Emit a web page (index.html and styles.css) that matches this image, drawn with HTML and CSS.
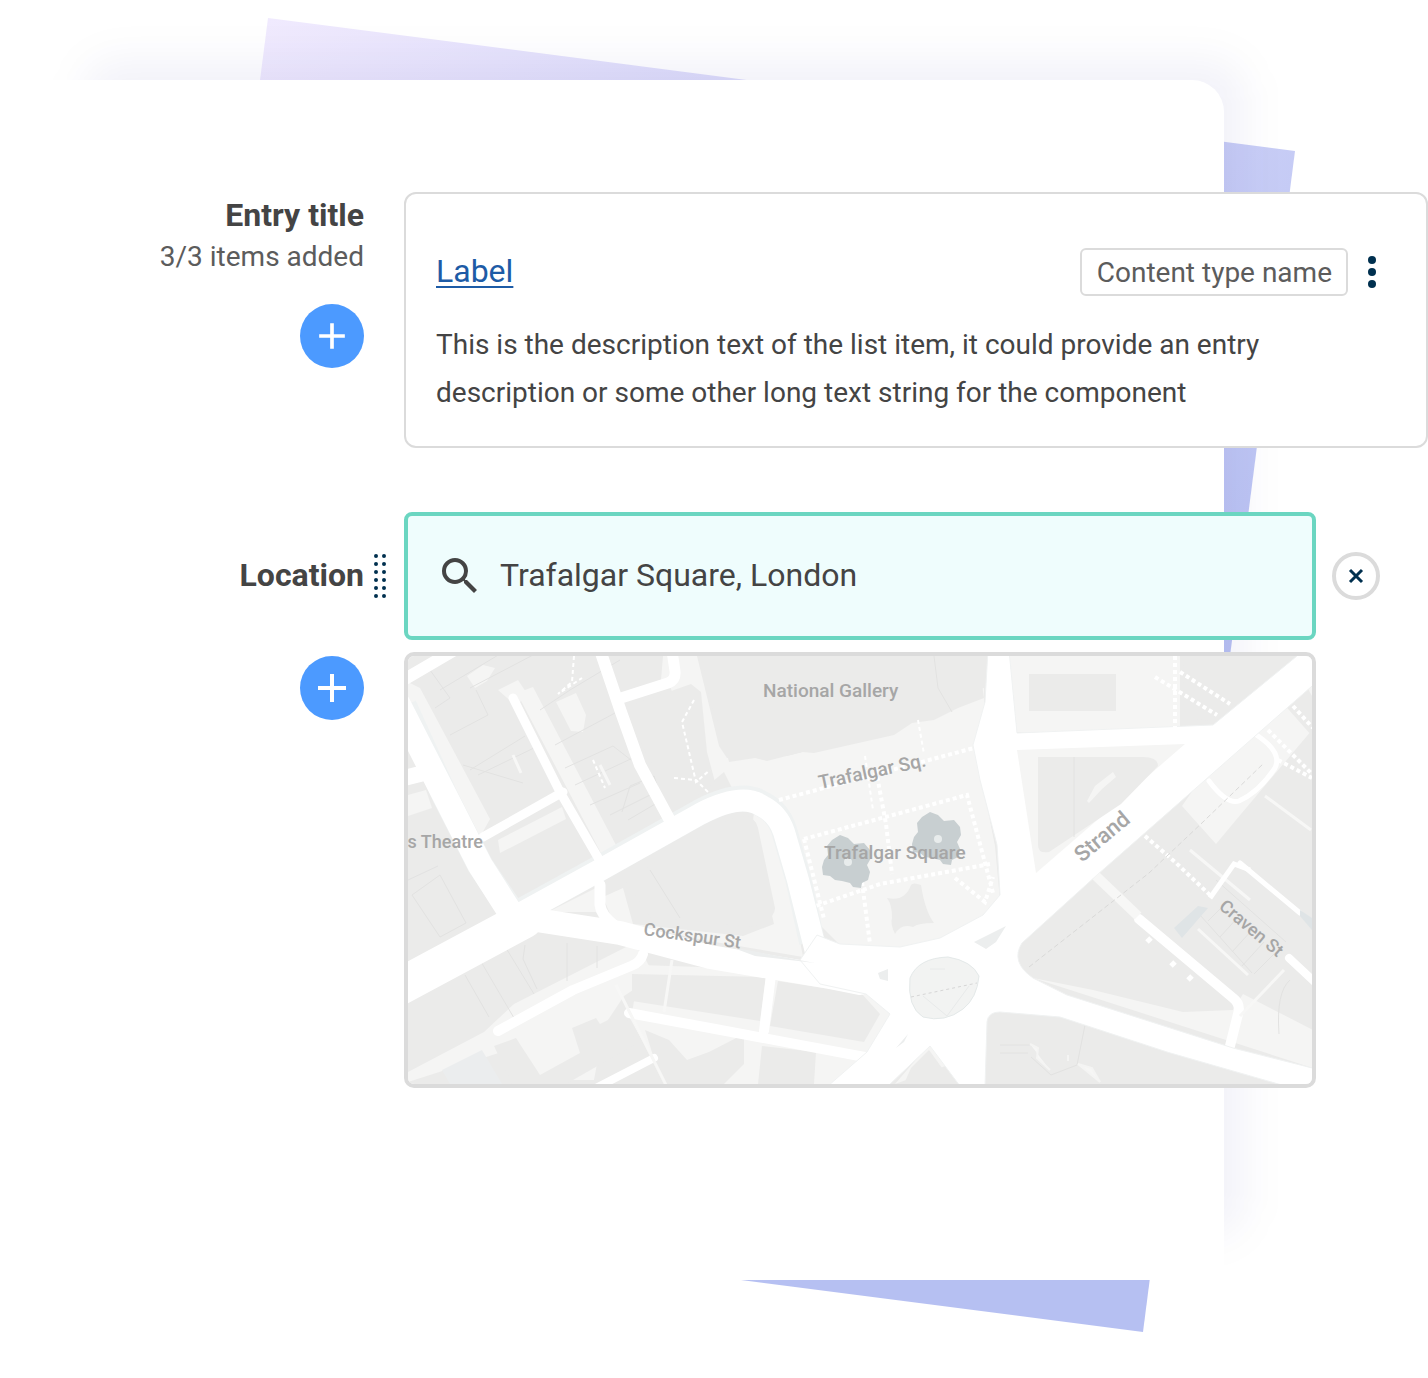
FILE: index.html
```html
<!doctype html>
<html lang="en">
<head>
    <meta charset="UTF-8">
    <meta name="viewport" content="width=device-width, initial-scale=1">
    <title>Entry editor</title>
    <link rel="stylesheet" href="styles.css">
</head>
<body>
<main class="stage">
    <svg class="backdrop" viewBox="0 0 1428 1378" aria-hidden="true">
        <defs>
            <linearGradient id="tint" gradientUnits="userSpaceOnUse" x1="268" y1="18" x2="1180" y2="800">
                <stop offset="0" stop-color="#f0eafe"/>
                <stop offset="1" stop-color="#b6c0f2"/>
            </linearGradient>
            <filter id="soft" x="-20%" y="-20%" width="140%" height="140%">
                <feGaussianBlur stdDeviation="20"/>
            </filter>
        </defs>
        <polygon points="268,18 1295,151 1143,1332 116,1199" fill="url(#tint)"/>
        <rect x="84" y="60" width="1160" height="1176" rx="32" fill="#28148c" fill-opacity=".05" filter="url(#soft)"/>
    </svg>
    <div class="panel"></div>
    <form class="form">
        <section class="row">
            <div class="head">
                <h2 class="title">Entry title</h2>
                <p class="count">3/3 items added</p>
                <button class="add" type="button" aria-label="Add item">
                    <svg class="add-icon add-icon-small" viewBox="0 0 24 24"><path d="M19 13h-6v6h-2v-6H5v-2h6V5h2v6h6z"/></svg>
                </button>
            </div>
            <article class="card">
                <div class="card-top">
                    <a class="card-link" href="#">Label</a>
                    <span class="type">Content type name</span>
                    <button class="more" type="button" aria-label="More options">
                        <svg width="16" height="48" viewBox="0 0 16 48"><circle cx="8" cy="12" r="4"/><circle cx="8" cy="24" r="4"/><circle cx="8" cy="36" r="4"/></svg>
                    </button>
                </div>
                <p class="card-text">This is the description text of the list item, it could provide an entry description or some other long text string for the component</p>
            </article>
        </section>

        <section class="row row-location">
            <label class="title title-side" for="location">Location</label>
            <button class="drag" type="button" aria-label="Reorder">
                <svg width="12" height="44" viewBox="0 0 12 44">
                    <path d="M2 2v41M10 2v41" stroke="#00304f" stroke-width="4" stroke-linecap="round" stroke-dasharray="0 8"/>
                </svg>
            </button>
            <div class="search">
                <svg class="search-icon" viewBox="0 0 24 24"><path d="M15.5 14h-.79l-.28-.27A6.47 6.47 0 0 0 16 9.500 6.500 6.500 0 1 0 9.500 16c1.610 0 3.090-.59 4.230-1.570l.27.28v.79l5 4.990L20.490 19l-4.990-5zm-6 0C7.010 14 5 11.990 5 9.500S7.010 5 9.500 5 14 7.010 14 9.500 11.990 14 9.500 14z"/></svg>
                <input class="search-input" id="location" type="text" value="Trafalgar Square, London">
            </div>
            <button class="remove" type="button" aria-label="Remove location">
                <svg width="16" height="16" viewBox="0 0 16 16"><path d="M2 2l12 12M14 2L2 14" stroke="#00304f" stroke-width="3"/></svg>
            </button>
            <button class="add add-map" type="button" aria-label="Add location">
                <svg class="add-icon" viewBox="0 0 24 24"><path d="M19 13h-6v6h-2v-6H5v-2h6V5h2v6h6z"/></svg>
            </button>
            <div class="map">
                <svg class="map-svg" viewBox="408 656 904 428" role="img" aria-label="Map of Trafalgar Square">
                    <rect x="408" y="656" width="904" height="428" fill="#ebebea"/>

                    <!-- open ground -->
                    <g fill="#f5f5f4">
                        <path d="M408 682l12 6 70 131-10 18-72-125zM467 676l16-11 12 3 -8 13 -12 7zM498 690l20-10 12 18 -16 6zM556 702l20-9 10 22-3 17-12-1zM408 795l18-5 6 18-24 8z"/>
                        <path d="M517 693l16-6 84 160-14 10zM498 840l64-33 4 12-66 34zM653 656h44l22 90 8 12 55-6 5 4 40-10 20-8 26-12 26-14 25-8 10-4 50-12v80l-10 20-70 4-90 30-80-30-10-20-24 20-14-20-2-46-14-40-44 10z"/>
                        <path d="M780 798l195-52 20 100 5 55-30 30-60 18-70-4-20-20z"/>
                        <path d="M1009 656h171v76h-163zM755 805l22 12 26 140-100-17-90-19-10-24 20-9 10 36 110 12 31-12-22-96zM548 912l48-24v24zM408 1082v-10l76-40 30-28 118-60 12 12 10 20-30 20 -20 30-10 54h-76l-10-30z"/>
                        <path d="M640 965l60 2 200 30-2 40-26 20-160-30-80-14zM627 1013l40 72h170l40-30zM895 1084l36-42 20 22zM1033 978l60 12 90 22 50-2 10-16 70 36v38z"/>
                        <path d="M1200 780l112-104v54l-76 90-20 24-34-38z"/>
                    </g>

                    <!-- buildings -->
                    <g fill="#ebebea">
                        <path d="M702 656h276l6 42-26 10-24 12-22 3-18 12-80 18-12-1-35 9-12-3-26 4-9-36-10-24z"/>
                        <path d="M623 708l68-24 10 8 6 60 8 30-42 32-16-40zM607 656h56l-2 24-40 14z"/>
                        <path d="M1029 674h87v37h-87z"/>
                        <path d="M1183 656h113l-78 65q-34 0-34-14z"/>
                        <path d="M625 880l100-58q28-14 33 6l17 80q0 12-22 19l-103-10zM632 974l134 3-6 44-128-20zM778 981l84 13 18 20-16 28-94-16zM494 1046l22-8 24 37 40-22-8-25 24-10 4 6 24-12 12 32-70 40h-54zM645 1030l24 10 18 20 22-8 35-18v30l-20 20h-62zM762 1046l54 6-2 32h-56z"/>
                        <path d="M887 898q18 4 24-13 2-3 10 0 4 26 13 38-16 0-21 4-12-4-18 7-5-10-3-16 0-14-5-20z"/>
                        <path d="M1281 701l31 35v-40l-10-18z"/>
                    </g>

                    <!-- plot outlines -->
                    <g fill="none" stroke="#e2e2e1" stroke-width="1">
                        <path d="M430 670l20 28-15 10M440 690l60-36M450 735l38-20-12-25M470 770l55-34M463 765l60 18M478 775l58-28M470 688l84-44M540 710l30-20 50-30M555 745l60-32M565 768l48-22 18 14M575 785l60-28M590 805l50-22M610 815l40-20M622 812l8-26 24-10 8 24-34 20"/>
                        <path d="M412 895l28-20 26 48-26 14zM408 880l30-14M465 975l24 42M480 960l34 58M506 948l28 46M525 945l-2 14 14 30M567 943v38M597 946v22M650 870l30 48M934 656l4 32 14 24"/>
                        <path d="M1200 915l52 58M1216 880l70 62M1226 903l-18 18M1240 915l-20 22M1252 930l-20 22M1264 942l-22 24M1276 952l-22 22M1290 980q-14 12-11 54M1000 1045h30M1000 1053h28M1085 1025l-8 40-26 10-20-18"/>
                    </g>
                    <path d="M450 1084l-8-14 40-20 20 34z" fill="#ebedee"/>

                    <!-- road edges -->
                    <g fill="none" stroke="#eff2f2" stroke-width="26" stroke-linejoin="round">
                        <path d="M404 706l41 90 35 69 30 44M520 912l80-44 100-56q42-22 62-8 16 8 22 26l14 48 14 64"/>
                    </g>

                    <!-- roads -->
                    <g fill="none" stroke="#fff" stroke-linecap="round" stroke-linejoin="round">
                        <path stroke-width="25" d="M398 704l47 92 35 69 30 47"/>
                        <path stroke-width="16" d="M400 779l36-9"/>
                        <path stroke-width="12" d="M400 682l58-34M600 650l21 62 19 53 34 63"/>
                        <path stroke-width="9" d="M513 698l47 94 44 76M483 837l80-45"/>
                        <path stroke-width="11" d="M621 698l47-15q8-3 7-12l-3-20M600 885v20q1 10 14 20"/>
                        <path stroke-width="37" d="M390 992l134-72"/>
                        <path stroke-width="22" d="M520 914l80-44 100-56q42-22 62-8 16 8 22 26l14 48 20 80"/>
                        <path stroke-width="24" d="M530 919l90 14 90 24 120 20 30 6"/>
                        <path stroke-width="10" d="M498 1031l75-41 58-24q10-4 12-12M629 1013l81 15 160 30M771 975l-7 56M1139 919l94 79q8 6 5 16l-8 32"/>
                        <path stroke-width="8" d="M594 1089l60-31M1289 958l30 28"/>
                        <path stroke-width="5" d="M1240 863l60 50M1255 734q28 18 20 34-16 24-36 33-12 4-30-20"/>
                    </g>
                    <path d="M988 650L985 702 973 745 980 780 997 845 1000 895 983 915 940 938 900 947 840 944 817 935 800 960 820 984 866 994 890 1014 867 1052 828 1086H888L930 1046 960 1086H985L987 1022Q988 1012 1000 1012L1060 1017 1167 1052 1320 1096V1070L1233 1048 1067 995 1033 978Q1010 962 1022 943L1097 875 1320 679V636L1297 656 1213 725 1017 733 1009 650z" fill="#fff" stroke="#f0f2f2" stroke-width="1"/>

                    <!-- strand corner block -->
                    <path d="M1017 750l168-6-149 129z" fill="#f5f5f4"/>
                    <path d="M1038 757h105q15 0 15 9l-37 38-72 48q-11 2-11-7z" fill="#ebebea"/>
                    <path d="M1087 801l8-15 18-14 3 5-14 12-13 14z" fill="#f5f5f4"/>
                    <path d="M1074 757v80" stroke="#e2e2e1"/>
                    <path d="M903 1086l8-18 18-18 26 36z" fill="#ebebea"/>

                    <!-- square and islands -->
                    <path d="M910 978q8-20 38-21 24 4 31 19-2 22-16 33-18 14-40 8-16-10-13-39z" fill="#f2f3f2" stroke="#e4e9e9"/>
                    <path d="M911 997l66-14" stroke="#d6d6d6" stroke-width="1" stroke-dasharray="3 3"/>
                    <path d="M923 996l24 20 22-30M930 969h15" stroke="#e8eaea" fill="none"/>
                    <path d="M974 942l32-16-10 16-10 7zM731 947l84 16-60-7zM878 973l10-4v12l-8-2zM896 1048l12-14-4 8z" fill="#eceeee"/>

                    <!-- footpaths -->
                    <g fill="none" stroke="#fff" stroke-width="4" stroke-dasharray="4 3">
                        <path d="M779 800l195-52M804 839l163-44 26 98M804 839l20 80M810 908l70-24 110-20M862 882l8 62M876 770l10 54 6 50M955 878l30 24 8-25"/>
                        <path d="M1175 656v74M1155 677l62 38M1180 672l50 32M1293 706l20 22M1268 730l44 44M1278 760l34 18M1145 836l30 26 36 34"/>
                        <path stroke-width="2" d="M694 700l-12 22 14 60 14-12M674 778l22 2 12 12M593 760l12 28M574 656l-2 26-14 12 24-16M865 756l8 54M918 720l6 34"/>
                    </g>
                    <g fill="none" stroke="#f7f7f6" stroke-width="3">
                        <path d="M600 765l10 20M513 755l8 18M672 960l-8 52M616 985l50 100M1198 929l50 46M1284 970l-44 46M1190 850l60 50M1265 796l46 34"/>
                        <path stroke-width="10" d="M1096 876l42 40"/>
                    </g>
                    <path d="M1210 898l24-34 16 6M1151 938l-4 4M1175 962l-4 4M1192 976l-4 4" fill="none" stroke="#fff" stroke-width="5"/>
                    <path d="M1029 967l120-94 55-52 60-58" fill="none" stroke="#d9d9d8" stroke-width="1" stroke-dasharray="5 3"/>
                    <path d="M1174 928l24-22 10 2-26 30zM1300 910l12 8v12l-12-14z" fill="#dfe4e6"/>
                    <path d="M1030 1044l8 4-1 10 13 12M1078 1064l14 4 8 14zM1068 1055v6" fill="#f6f6f5" stroke="#f4f4f3" stroke-width="2"/>

                    <!-- fountains -->
                    <g id="fountain">
                        <path d="M832 840l8-5 8 3 6 6 10-1 6 7 1 8-4 7 3 7-2 8-6 3-1 5-8-1-3-4-8-2-7-1-5-4-7-1-1-8 2-7 4-5-1-9z" fill="#c8cfd1"/>
                        <circle cx="848" cy="862" r="4" fill="#e8ecec"/>
                    </g>
                    <use href="#fountain" x="90" y="-23"/>

                    <!-- place names -->
                    <g class="map-label">
                        <text class="map-label-place" x="763" y="697">National Gallery</text>
                        <text class="map-label-place" x="824" y="859">Trafalgar Square</text>
                        <text x="483" y="848" text-anchor="end">s Theatre</text>
                        <text class="map-label-place" transform="translate(820 789) rotate(-12)">Trafalgar Sq.</text>
                        <text transform="translate(643 935) rotate(8)">Cockspur St</text>
                        <text class="map-label-large" transform="translate(1082 863) rotate(-40)">Strand</text>
                        <text transform="translate(1218 908) rotate(40)">Craven St</text>
                    </g>
                </svg>
            </div>
        </section>
    </form>
</main>
</body>
</html>
```

FILE: styles.css
```css
* {
    margin: 0;
    padding: 0;
    box-sizing: border-box;
}

body {
    background: #fff;
    color: #444;
    font-family: Roboto, sans-serif;
}

button {
    border: 0;
    background: none;
    cursor: pointer;
}

svg {
    display: block;
}

/* panel and form share one grid cell, the form runs past the panel edge */
.stage {
    position: relative;
    display: grid;
    padding: 80px 0 98px;
    overflow: hidden;
}

.backdrop {
    position: absolute;
    top: 0;
    left: 0;
    width: 100%;
    z-index: -1;
}

.panel, .form {
    grid-area: 1 / 1;
}

.panel {
    min-height: 1200px;
    margin-right: 204px;
    border-radius: 0 32px 0 0;
    background: #fff;
}

.form {
    display: flex;
    flex-direction: column;
    gap: 64px;
    padding-top: 112px;
}

.row {
    display: grid;
    grid-template-columns: 364px minmax(0, 1fr);
    column-gap: 40px;
}

.head {
    display: flex;
    flex-direction: column;
    align-items: flex-end;
}

.title {
    font-size: 32px;
    line-height: 46px;
    font-weight: 700;
}

.title-side {
    padding-bottom: 2px;
    text-align: right;
}

.count {
    color: #5c5c5c;
    font-size: 28px;
    line-height: 38px;
}

.add {
    display: flex;
    align-items: center;
    justify-content: center;
    width: 64px;
    height: 64px;
    border-radius: 50%;
    background: #4c9aff;
}

.head .add {
    margin-top: 28px;
}

.add-icon {
    width: 48px;
    height: 48px;
    fill: #fff;
}

.add-icon-small {
    width: 44px;
    height: 44px;
}

.card {
    padding: 54px 30px 29px;
    border: 2px solid #dbdbdb;
    border-radius: 12px;
    background: #fff;
}

.card-top {
    display: flex;
    align-items: center;
    gap: 16px;
    padding-right: 16px;
    margin-bottom: 25px;
}

.card-link {
    margin-right: auto;
    padding-bottom: 2px;
    color: #1d5ba6;
    font-size: 32px;
    line-height: 46px;
    text-decoration-thickness: 2px;
    text-underline-offset: 4px;
}

.type {
    padding: 2px 14px 0 15px;
    border: 2px solid #dbdbdb;
    border-radius: 6px;
    color: #5c5c5c;
    font-size: 28px;
    line-height: 42px;
}

.more {
    fill: #00304f;
}

.card-text {
    font-size: 28px;
    line-height: 48px;
}

.row-location {
    grid-template-columns: 364px 40px minmax(0, 1fr) 112px;
    column-gap: 0;
    row-gap: 12px;
    align-items: center;
}

.drag {
    justify-self: start;
    padding-left: 10px;
    cursor: grab;
}

.search {
    display: flex;
    align-items: center;
    gap: 16px;
    height: 128px;
    padding: 0 28px;
    border: 4px solid #6bd6c1;
    border-radius: 8px;
    background: #effdfd;
}

.search-icon {
    flex: none;
    width: 48px;
    height: 48px;
    fill: #444;
}

.search-input {
    flex: 1;
    min-width: 0;
    padding-bottom: 2px;
    border: 0;
    outline: 0;
    background: none;
    color: #444;
    font: 32px/46px Roboto, sans-serif;
}

.remove {
    display: flex;
    align-items: center;
    justify-content: center;
    width: 48px;
    height: 48px;
    margin-left: 16px;
    border: 4px solid #dbdbdb;
    border-radius: 50%;
    background: #fff;
}

.add-map {
    align-self: start;
    justify-self: end;
    margin-top: 4px;
}

.map {
    grid-column: 3;
    overflow: hidden;
    border: 4px solid #dbdbdb;
    border-radius: 10px;
}

.map-svg {
    width: 100%;
    height: auto;
}

.map-label {
    fill: #a6a6a6;
    font-size: 18px;
    font-weight: 500;
}

.map-label-place {
    font-size: 19px;
}

.map-label-large {
    font-size: 22px;
}
```
